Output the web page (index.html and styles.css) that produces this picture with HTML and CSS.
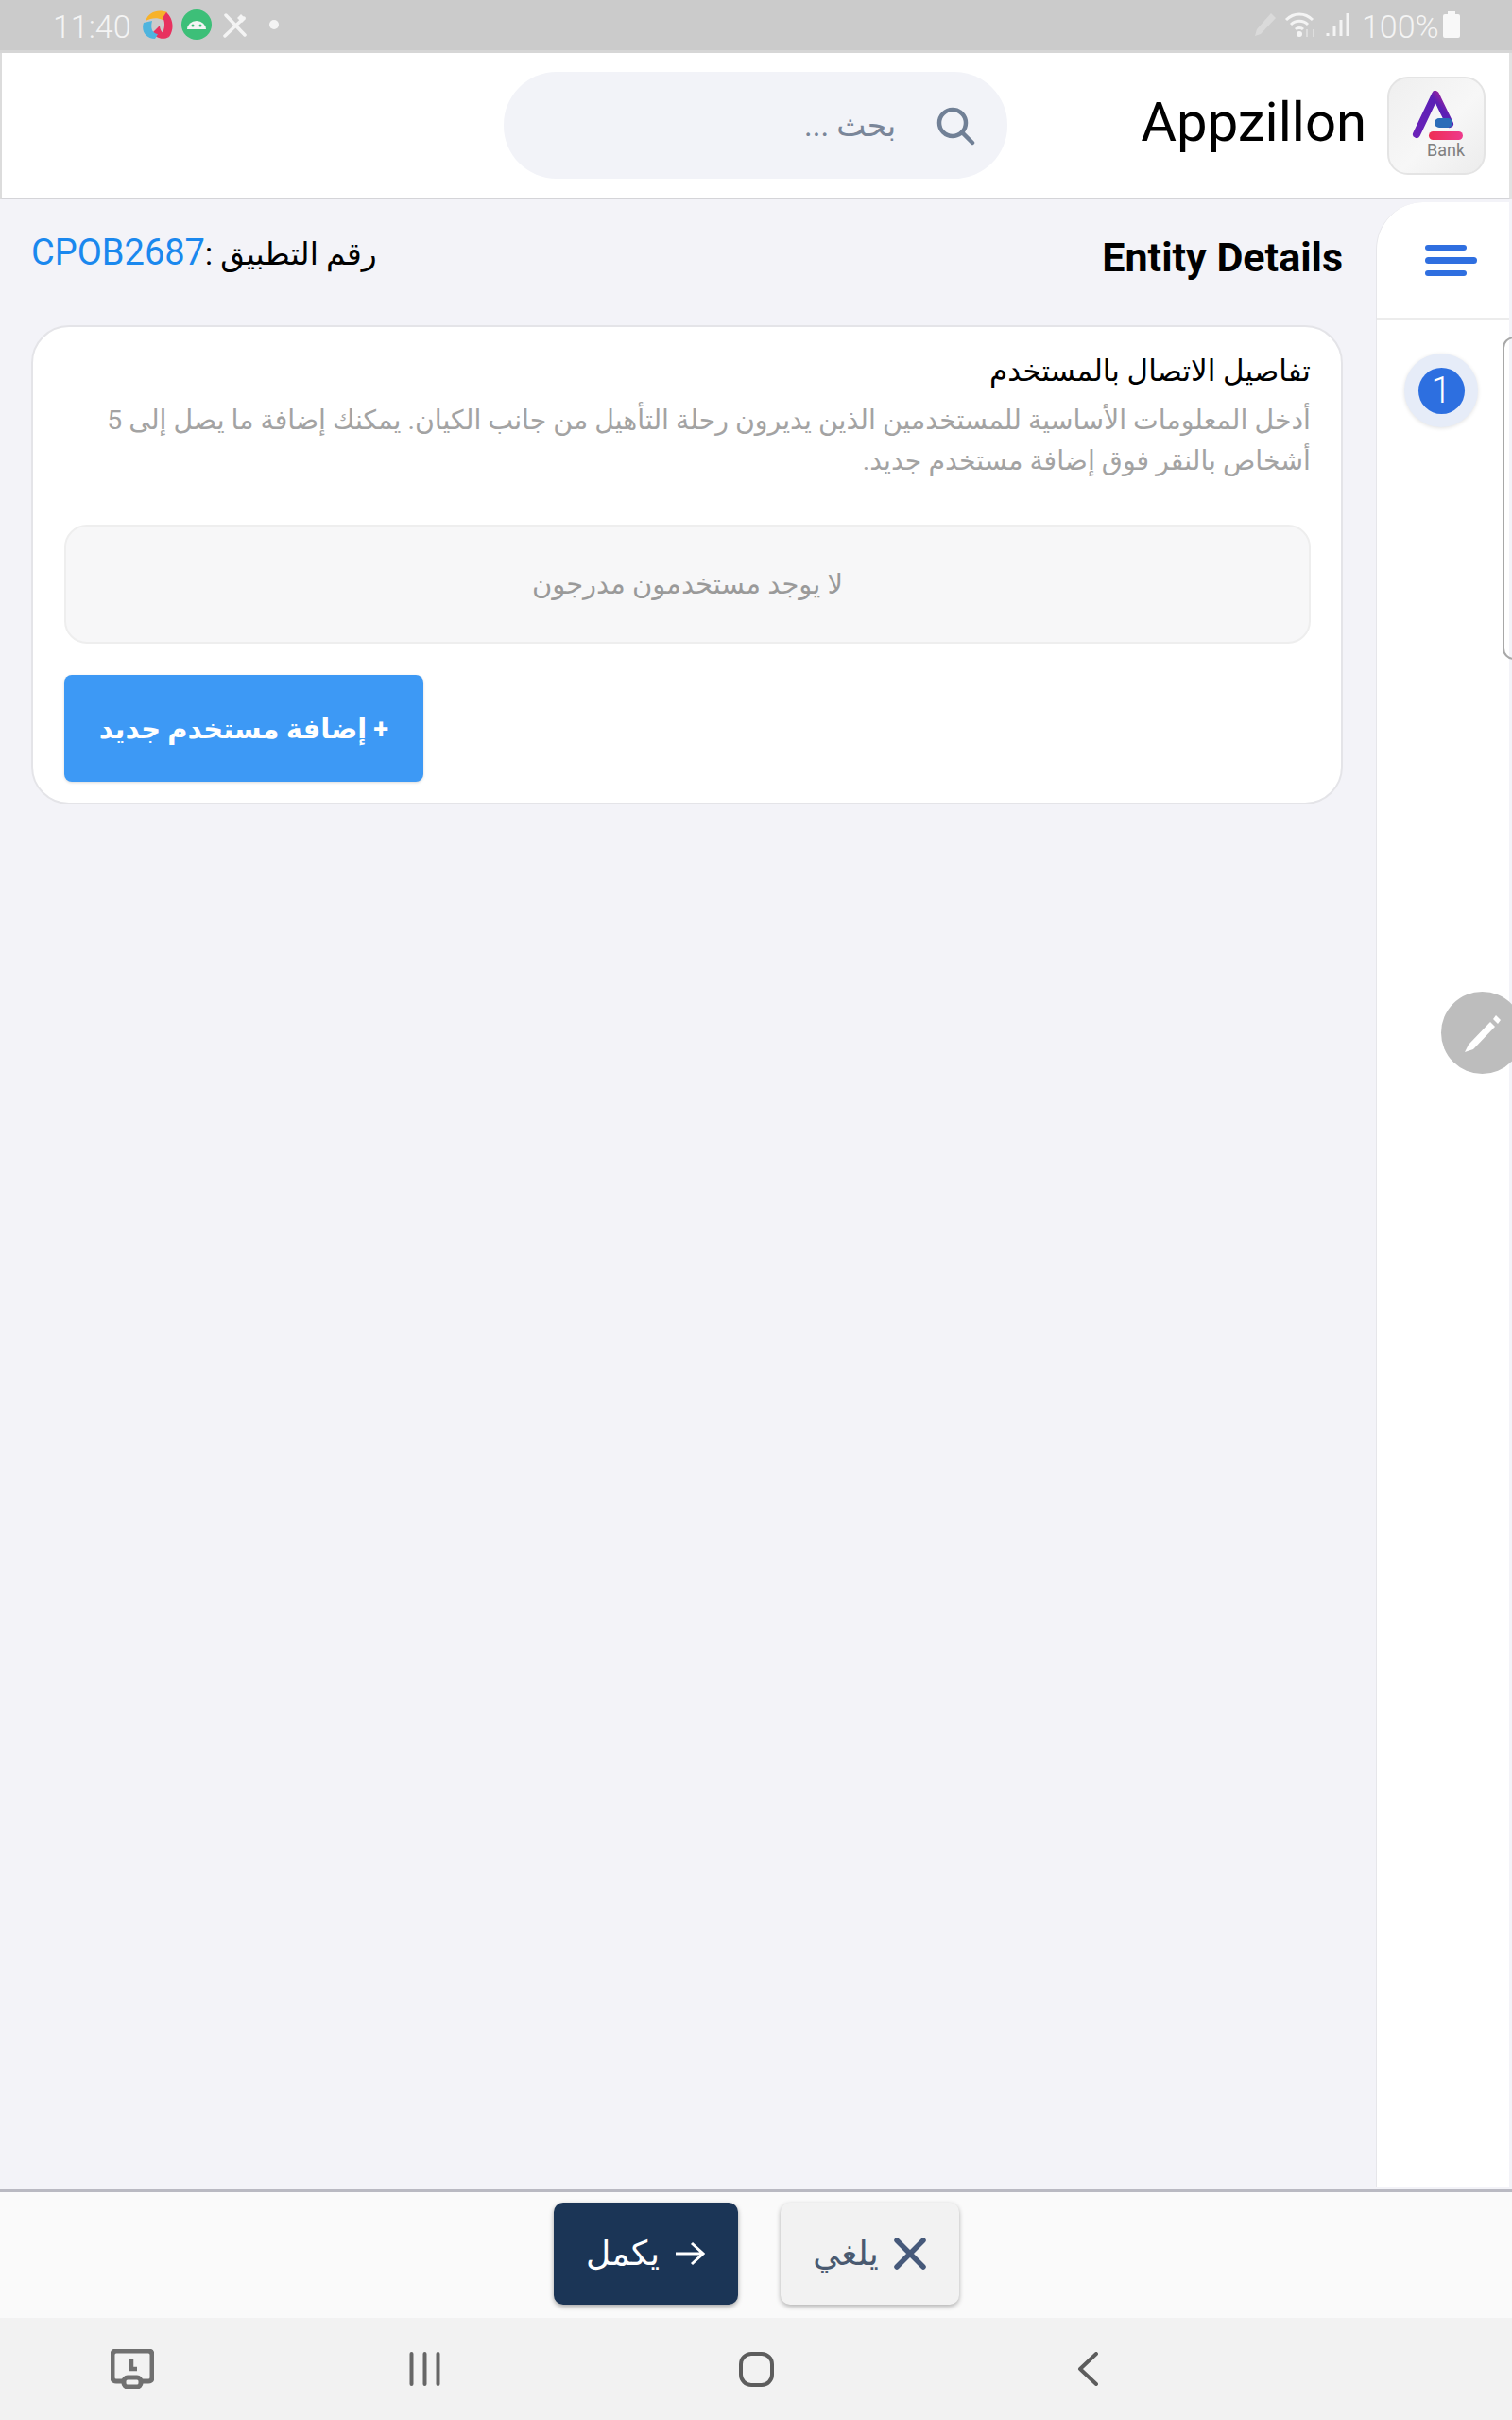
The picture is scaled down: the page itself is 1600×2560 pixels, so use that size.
FILE: index.html

```html
<!DOCTYPE html>
<html lang="ar" dir="rtl">
<head>
    <meta charset="UTF-8">
    <title>Appzillon</title>
    <link rel="stylesheet" href="styles.css">
</head>
<body>
    <div class="status-bar" dir="ltr">
        <span class="clock">11:40</span>
        <svg class="st-app" width="34" height="32" viewBox="0 0 34 32">
            <path d="M4 12C7 3 17 -1 27 3L22 11C16 8 10 9 4 12Z" fill="#f7b22a"/>
            <path d="M26 3C33 9 35 20 29 29L20 27C25 22 25 12 22 9Z" fill="#e8315f"/>
            <path d="M29 29C22 33 14 30 12 24L19 17C19 22 22 26 29 29Z" fill="#e8315f"/>
            <path d="M2 14C-1 22 4 31 14 31L17 26C11 25 9 20 11 12Z" fill="#4eb4de"/>
        </svg>
        <svg class="st-android" width="32" height="32" viewBox="0 0 32 32">
            <circle cx="16" cy="16" r="16" fill="#3dbf78"/>
            <path d="M6 21a10 9 0 0 1 20 0Z" fill="#f4f4f4"/>
            <circle cx="12" cy="17" r="1.500" fill="#3dbf78"/>
            <circle cx="20" cy="17" r="1.500" fill="#3dbf78"/>
        </svg>
        <svg class="st-tool" width="28" height="28" viewBox="0 0 28 28">
            <path d="M4 4L24 25M23 7L3 26" stroke="#f4f4f4" stroke-width="3.500" stroke-linecap="round"/>
            <path d="M20 3L25 8L21 12L16 7Z" fill="#f4f4f4"/>
        </svg>
        <span class="st-dot"></span>
        <span class="status-fill"></span>
        <svg class="st-pen" width="26" height="28" viewBox="0 0 26 28">
            <path d="M2 26L4 19L19 2L24 7L8 24Z" fill="#dadada"/>
        </svg>
        <svg class="st-wifi" width="34" height="30" viewBox="0 0 34 30">
            <path d="M2 10C10 2 22 2 30 10M7 15C12 10 20 10 25 15M12 20C14 18 18 18 20 20" fill="none" stroke="#f4f4f4" stroke-width="3"/>
            <circle cx="16" cy="25" r="3" fill="#f4f4f4"/>
            <path d="M24 28V20M31 28V20" stroke="#dedede" stroke-width="2"/>
        </svg>
        <svg class="st-signal" width="26" height="28" viewBox="0 0 26 28">
            <path d="M2 26V23M9 26V16M16 26V9M23 26V2" stroke="#f4f4f4" stroke-width="3"/>
        </svg>
        <span class="battery-text">100%</span>
        <svg class="st-battery" width="18" height="28" viewBox="0 0 18 28">
            <path d="M5 0H13V3H16Q18 3 18 5V26Q18 28 16 28H2Q0 28 0 26V5Q0 3 2 3H5Z" fill="#f8f8f8"/>
        </svg>
    </div>

    <header class="top-bar">
        <div class="logo-tile" dir="ltr">
            <svg width="62" height="60" viewBox="0 0 62 60">
                <defs>
                    <linearGradient id="aStroke" x1="0" y1="1" x2="1" y2="0">
                        <stop offset="0" stop-color="#6a22b8"/>
                        <stop offset="0.7" stop-color="#5a1fb5"/>
                        <stop offset="1" stop-color="#c2268f"/>
                    </linearGradient>
                    <linearGradient id="aBar" x1="0" y1="0" x2="1" y2="0">
                        <stop offset="0" stop-color="#ee2f55"/>
                        <stop offset="1" stop-color="#ee3a8c"/>
                    </linearGradient>
                </defs>
                <path d="M10 47L30 5L45 36" fill="none" stroke="url(#aStroke)" stroke-width="8" stroke-linecap="round" stroke-linejoin="round"/>
                <rect x="29" y="30" width="19" height="10" rx="5" fill="#2b6cb8"/>
                <rect x="23" y="44" width="36" height="9" rx="4.500" fill="url(#aBar)"/>
            </svg>
            <span class="logo-bank">Bank</span>
        </div>
        <span class="app-name" dir="ltr">Appzillon</span>
        <div class="search-box">
            <svg class="search-icon" width="42" height="42" viewBox="0 0 42 42">
                <circle cx="18" cy="18" r="14" fill="none" stroke="#718096" stroke-width="4.5"/>
                <path d="M28 28L39 39" stroke="#718096" stroke-width="4.5" stroke-linecap="round"/>
            </svg>
            <span class="search-hint">بحث ...</span>
        </div>
    </header>

    <div class="main">
        <aside class="rail">
            <div class="rail-top">
                <svg width="55" height="33" viewBox="0 0 55 33">
                    <rect x="0" y="0" width="44" height="6" rx="3" fill="#2f6fe0"/>
                    <rect x="0" y="13" width="55" height="7" rx="3.5" fill="#2f6fe0"/>
                    <rect x="0" y="27" width="44" height="6" rx="3" fill="#2f6fe0"/>
                </svg>
            </div>
            <div class="step-ring"><span class="step-num">1</span></div>
            <div class="scroll-handle"></div>
            <div class="edit-fab">
                <svg width="46" height="46" viewBox="0 0 46 46">
                    <path d="M8 35L31 11L36 16L13 40L4 43Z" fill="#fff"/>
                    <path d="M34 8L37 4L42 9L39 13Z" fill="#fff"/>
                </svg>
            </div>
        </aside>

        <section class="content">
            <div class="title-row">
                <h1 class="entity-title" dir="ltr">Entity Details</h1>
                <p class="app-number">رقم التطبيق :<span class="app-code">CPOB2687</span></p>
            </div>
            <div class="card">
                <h2 class="card-title">تفاصيل الاتصال بالمستخدم</h2>
                <p class="card-desc">أدخل المعلومات الأساسية للمستخدمين الذين يديرون رحلة التأهيل من جانب الكيان. يمكنك إضافة ما يصل إلى 5 أشخاص بالنقر فوق إضافة مستخدم جديد.</p>
                <div class="empty-box">لا يوجد مستخدمون مدرجون</div>
                <button class="add-btn">+ إضافة مستخدم جديد</button>
            </div>
        </section>
    </div>

    <footer class="action-bar">
        <button class="btn-cancel">
            <svg width="34" height="34" viewBox="0 0 34 34">
                <path d="M3 3L31 31M31 3L3 31" stroke="#46597a" stroke-width="5.5" stroke-linecap="round"/>
            </svg>
            يلغي
        </button>
        <button class="btn-next">
            <svg width="32" height="26" viewBox="0 0 32 26">
                <path d="M1 13H29M18 2L30 13L18 24" fill="none" stroke="#fff" stroke-width="3"/>
            </svg>
            يكمل
        </button>
    </footer>

    <nav class="nav-bar" dir="ltr">
        <svg class="nav-remote" width="46" height="42" viewBox="0 0 46 42">
            <path d="M12 34H6Q2 34 2 30V6Q2 2 6 2H40Q44 2 44 6V30Q44 34 40 34H34" fill="none" stroke="#707070" stroke-width="5"/>
            <rect x="14" y="30" width="18" height="10" rx="4" fill="none" stroke="#707070" stroke-width="5"/>
            <path d="M22 11V21H28" fill="none" stroke="#707070" stroke-width="4.500"/>
        </svg>
        <svg class="nav-recent" width="33" height="36" viewBox="0 0 33 36">
            <path d="M2.500 2V34M16.500 2V34M30.500 2V34" stroke="#666" stroke-width="4" stroke-linecap="round"/>
        </svg>
        <svg class="nav-home" width="37" height="37" viewBox="0 0 37 37">
            <rect x="2" y="2" width="33" height="33" rx="11" fill="none" stroke="#5d5d5d" stroke-width="4"/>
        </svg>
        <svg class="nav-back" width="22" height="36" viewBox="0 0 22 36">
            <path d="M20 2L3 18L20 34" fill="none" stroke="#5d5d5d" stroke-width="4" stroke-linecap="round" stroke-linejoin="round"/>
        </svg>
    </nav>
</body>
</html>
```

FILE: styles.css

```css
* {
    box-sizing: border-box;
}

html, body {
    margin: 0;
    padding: 0;
}

body {
    width: 1600px;
    height: 2560px;
    overflow: hidden;
    display: flex;
    flex-direction: column;
    background-color: #f3f3f8;
    font-family: Roboto, "Noto Sans", "DejaVu Sans", sans-serif;
}

/* status bar */
.status-bar {
    height: 56px;
    flex: none;
    display: flex;
    align-items: center;
    padding: 2px 55px 0 56px;
    background-color: #cbcbcb;
    border-bottom: 3px solid #d6d6d6;
    color: #f4f4f4;
}

.clock {
    font-size: 34px;
    font-weight: 300;
    width: 94px;
}

.st-app {
    margin-top: -3px;
}

.st-android {
    margin-left: 8px;
    margin-top: -3px;
}

.st-tool {
    margin-left: 11px;
    margin-top: -3px;
}

.st-dot {
    width: 10px;
    height: 10px;
    border-radius: 50%;
    margin-left: 22px;
    margin-top: -3px;
    background-color: #f4f4f4;
}

.status-fill {
    flex: 1;
}

.st-pen, .st-wifi, .st-signal, .st-battery {
    margin-top: -3px;
}

.st-wifi {
    margin-left: 7px;
}

.st-signal {
    margin-left: 10px;
}

.battery-text {
    font-size: 34px;
    font-weight: 300;
    margin-left: 12px;
    width: 86px;
}

/* header */
.top-bar {
    height: 155px;
    flex: none;
    display: flex;
    align-items: center;
    padding-right: 25px;
    background-color: #fff;
    border-left: 2px solid #dcdcdc;
    border-right: 3px solid #e2e2e2;
    border-bottom: 2px solid #d4d4d8;
}

.logo-tile {
    width: 104px;
    height: 104px;
    flex: none;
    display: flex;
    flex-direction: column;
    align-items: center;
    padding-top: 12px;
    border-radius: 22px;
    border: 2px solid #e4e4e4;
    background: linear-gradient(135deg, #efefef, #f7f7f7 55%, #ececec);
}

.logo-tile svg {
    display: block;
}

.logo-bank {
    font-size: 18px;
    line-height: 18px;
    margin-top: -5px;
    margin-left: 20px;
    color: #808080;
}

.app-name {
    margin: -7px 22px 0 0;
    font-size: 58px;
    color: #000;
}

.search-box {
    width: 533px;
    height: 113px;
    margin-right: 141px;
    display: flex;
    align-items: center;
    gap: 42px;
    padding-right: 34px;
    border-radius: 56px;
    background-color: #f2f3f8;
}

.search-hint {
    font-size: 33px;
    color: #7a8699;
}

/* main area */
.main {
    flex: 1;
    display: flex;
    min-height: 0;
}

.rail {
    position: relative;
    width: 141px;
    flex: none;
    margin: 3px 3px 3px 0;
    background-color: #fff;
    border-top-left-radius: 50px;
    border-left: 1px solid #e6e6ea;
}

.rail-top {
    height: 124px;
    display: flex;
    align-items: center;
    padding-right: 34px;
    border-bottom: 2px solid #ececec;
}

.step-ring {
    width: 78px;
    height: 78px;
    margin: 36px 33px 0 0;
    display: flex;
    align-items: center;
    justify-content: center;
    border-radius: 50%;
    background-color: #e6ecf8;
    box-shadow: 0 1px 4px rgba(0, 0, 0, 0.12);
}

.step-num {
    width: 49px;
    height: 49px;
    border-radius: 50%;
    text-align: center;
    font-size: 38px;
    line-height: 49px;
    font-weight: 300;
    color: #fff;
    background-color: #2d6fe0;
}

.scroll-handle {
    position: absolute;
    top: 142px;
    right: -20px;
    width: 27px;
    height: 342px;
    border: 2px solid #a8a8a8;
    border-radius: 12px;
}

.edit-fab {
    position: absolute;
    top: 835px;
    right: -15px;
    width: 87px;
    height: 87px;
    display: flex;
    align-items: center;
    justify-content: center;
    border-radius: 50%;
    background-color: #bdbdbd;
}

.content {
    flex: 1;
    padding: 0 35px 0 33px;
}

.title-row {
    height: 114px;
    margin-bottom: 19px;
    display: flex;
    align-items: center;
    justify-content: space-between;
}

.entity-title {
    margin: 8px 0 0;
    font-size: 43px;
    font-weight: 700;
    color: #000;
}

.app-number {
    margin: -2px 0 0;
    font-size: 33px;
    color: #000;
}

.app-code {
    font-size: 38px;
    color: #1a88ee;
}

.card {
    height: 507px;
    padding: 26px 32px 0 33px;
    border-radius: 40px;
    border: 2px solid #e4e4e8;
    background-color: #fff;
}

.card-title {
    margin: 0;
    font-size: 31px;
    line-height: 42px;
    font-weight: 400;
    color: #000;
}

.card-desc {
    margin: 9px 0 0;
    font-size: 28.4px;
    line-height: 43px;
    color: #a3a3a3;
}

.empty-box {
    height: 126px;
    margin-top: 46px;
    display: flex;
    align-items: center;
    justify-content: center;
    border-radius: 24px;
    border: 2px solid #eeeeee;
    background-color: #f7f7f8;
    font-size: 29px;
    color: #9a9a9a;
}

.add-btn {
    display: block;
    width: 380px;
    height: 113px;
    margin: 33px auto 0 0;
    border: 0;
    border-radius: 8px;
    background-color: #3d99f5;
    color: #fff;
    font-family: inherit;
    font-size: 29px;
    font-weight: 700;
    box-shadow: 0 1px 3px rgba(0, 0, 0, 0.15);
}

/* footer actions */
.action-bar {
    height: 136px;
    flex: none;
    display: flex;
    align-items: center;
    justify-content: center;
    gap: 45px;
    padding-bottom: 3px;
    background-color: #fafafa;
    border-top: 3px solid #b9b9c2;
}

.btn-cancel, .btn-next {
    height: 108px;
    display: flex;
    align-items: center;
    justify-content: center;
    gap: 16px;
    border: 0;
    border-radius: 10px;
    font-family: inherit;
    font-size: 36px;
}

.btn-cancel {
    width: 189px;
    background-color: #f2f2f2;
    color: #4a5a70;
    box-shadow: 0 2px 5px rgba(0, 0, 0, 0.3);
}

.btn-next {
    width: 195px;
    background-color: #1b3556;
    color: #fff;
    box-shadow: 0 2px 5px rgba(0, 0, 0, 0.35);
}

/* android nav */
.nav-bar {
    height: 108px;
    flex: none;
    display: flex;
    align-items: center;
    padding: 0 0 0 117px;
    background-color: #f2f2f2;
}

.nav-recent {
    margin-left: 270px;
}

.nav-home {
    margin-left: 316px;
}

.nav-back {
    margin-left: 321px;
}
```
